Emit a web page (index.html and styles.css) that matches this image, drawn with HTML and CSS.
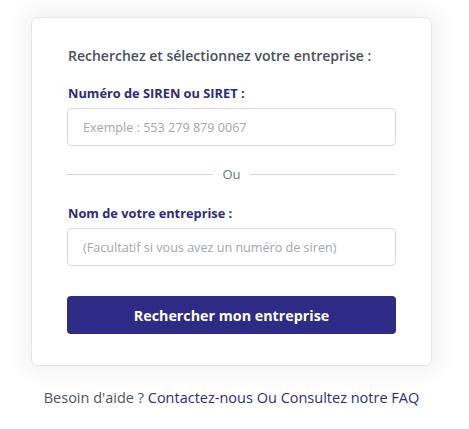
FILE: index.html
```html
<!DOCTYPE html>
<html lang="fr">
<head>
<meta charset="utf-8">
<link rel="stylesheet" href="styles.css">
</head>
<body>
<main class="page">
  <section class="card">
    <h1 class="title">Recherchez et sélectionnez votre entreprise :</h1>
    <label class="label" for="siren">Numéro de SIREN ou SIRET :</label>
    <input class="input" id="siren" type="text" placeholder="Exemple : 553 279 879 0067">
    <div class="divider"><span class="line"></span><span class="or">Ou</span><span class="line"></span></div>
    <label class="label" for="nom">Nom de votre entreprise :</label>
    <input class="input" id="nom" type="text" placeholder="(Facultatif si vous avez un numéro de siren)">
    <button class="btn" type="button">Rechercher mon entreprise</button>
  </section>
  <p class="help">Besoin d'aide ? <a href="#">Contactez-nous</a> <a href="#">Ou</a> <a href="#">Consultez notre FAQ</a></p>
</main>
</body>
</html>
```
FILE: styles.css
```css
* { box-sizing: border-box; }
html, body { margin: 0; background: #ffffff; }
body { font-family: "Open Sans", "Noto Sans", sans-serif; }
.page { padding: 17px 37px 0 31px; }
.card {
  background: #fff;
  border: 1px solid #e3e5e8;
  border-radius: 7px;
  box-shadow: 0 0 20px 8px rgba(0,0,0,0.05);
  padding: 28px 35px 31px 35px;
  display: flex;
  flex-direction: column;
}
.title {
  margin: 0 0 18px 1px;
  font-size: 14px;
  font-weight: 600;
  color: #4a4f59;
  line-height: 20px;
}
.label {
  font-size: 12.8px;
  font-weight: 700;
  color: #2d2a7e;
  line-height: 18px;
  margin: 0 0 6px 1px;
}
.input {
  height: 38px;
  border: 1px solid #d7dae0;
  border-radius: 4px;
  padding: 0 15px;
  font-family: inherit;
  font-size: 12.6px;
  color: #333;
}
.input::placeholder { color: #a2a6ad; }
.divider {
  display: flex;
  align-items: center;
  gap: 9px;
  margin: 19px 0 21px;
  font-size: 13px;
  line-height: 18px;
  color: #6b7079;
}
.line { flex: 1; height: 1px; background: #d3d6dc; }
.btn {
  margin-top: 30px;
  height: 38px;
  border: 0;
  border-radius: 4px;
  background: #2d2b86;
  color: #fff;
  font-family: inherit;
  font-size: 14.3px;
  font-weight: 700;
}
.help {
  margin: 23px 0 0;
  text-align: center;
  font-size: 14.5px;
  line-height: 18px;
  color: #4e535c;
}
.help a { color: #2d2b86; text-decoration: none; }
```
